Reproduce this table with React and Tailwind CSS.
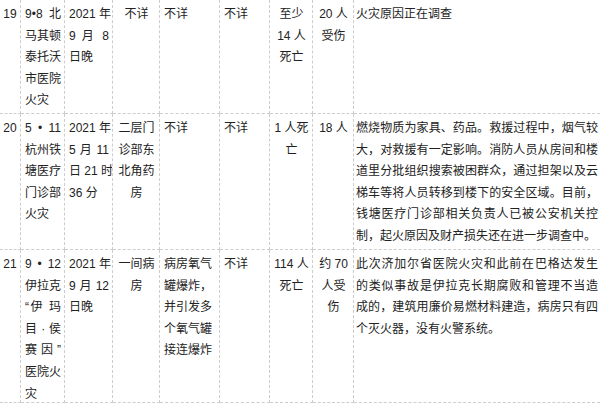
const COLS = [
  { w: "w-[21px]", align: "center" },
  { w: "w-[44px]", align: "justify" },
  { w: "w-[48px]", align: "justify" },
  { w: "w-[47px]", align: "center" },
  { w: "w-[60px]", align: "left" },
  { w: "w-[50px]", align: "left" },
  { w: "w-[43px]", align: "center" },
  { w: "w-[41px]", align: "center" },
  { w: "flex-1", align: "justify" },
];

const ROWS = [
  {
    h: "h-[114px]",
    cells: [
      ["19"],
      ["9•8 北", "马其顿", "泰托沃", "市医院", "火灾"],
      ["2021 年", "9 月 8", "日晚"],
      ["不详"],
      ["不详"],
      ["不详"],
      ["至少", "14 人", "死亡"],
      ["20 人", "受伤"],
      ["火灾原因正在调查"],
    ],
  },
  {
    h: "h-[136px]",
    cells: [
      ["20"],
      ["5 • 11", "杭州铁", "塘医疗", "门诊部", "火灾"],
      ["2021 年", "5 月 11", "日 21 时", "36 分"],
      ["二层门", "诊部东", "北角药", "房"],
      ["不详"],
      ["不详"],
      ["1 人死", "亡"],
      ["18 人"],
      [
        "燃烧物质为家具、药品。救援过程中，烟气较",
        "大，对救援有一定影响。消防人员从房间和楼",
        "道里分批组织搜索被困群众，通过担架以及云",
        "梯车等将人员转移到楼下的安全区域。目前，",
        "钱塘医疗门诊部相关负责人已被公安机关控",
        "制，起火原因及财产损失还在进一步调查中。",
      ],
    ],
  },
  {
    h: "h-[153px]",
    cells: [
      ["21"],
      ["9 • 12", "伊拉克", "“伊 玛", "目 · 侯", "赛 因 ”", "医院火", "灾"],
      ["2021 年", "9 月 12", "日晚"],
      ["一间病", "房"],
      ["病房氧气", "罐爆炸，", "并引发多", "个氧气罐", "接连爆炸"],
      ["不详"],
      ["114 人", "死亡"],
      ["约 70", "人受", "伤"],
      [
        "此次济加尔省医院火灾和此前在巴格达发生",
        "的类似事故是伊拉克长期腐败和管理不当造",
        "成的，建筑用廉价易燃材料建造，病房只有四",
        "个灭火器，没有火警系统。",
      ],
    ],
  },
];

function Cell({ lines, col }) {
  const c = COLS[col];
  return (
    <div
      className={`${c.w} shrink-0 border-b border-dashed border-[#cdcdcd] ${
        col < 8 ? "border-r" : ""
      } ${col === 8 ? "pl-[2px] pr-[2px]" : col === 0 ? "px-0" : "pl-[4px] pr-[3px]"} pt-[4px] overflow-hidden`}
    >
      {lines.map((l, i) => {
        const isLast = i === lines.length - 1;
        let cls = "whitespace-nowrap";
        if (c.align === "center") cls += " text-center";
        else if (c.align === "justify" && !isLast) cls += " text-justify [text-align-last:justify]";
        else cls += " text-left";
        return (
          <div key={i} className={cls}>
            {l}
          </div>
        );
      })}
    </div>
  );
}

export default function App() {
  return (
    <div
      className="w-[600px] h-[405px] bg-white overflow-hidden text-[12px] leading-[21.6px] text-[#222222]"
      style={{ fontFamily: '"Liberation Sans", "Noto Sans CJK SC", sans-serif' }}
    >
      {ROWS.map((row, r) => (
        <div key={r} className={`flex ${row.h}`}>
          {row.cells.map((lines, c) => (
            <Cell key={c} lines={lines} col={c} />
          ))}
        </div>
      ))}
    </div>
  );
}
